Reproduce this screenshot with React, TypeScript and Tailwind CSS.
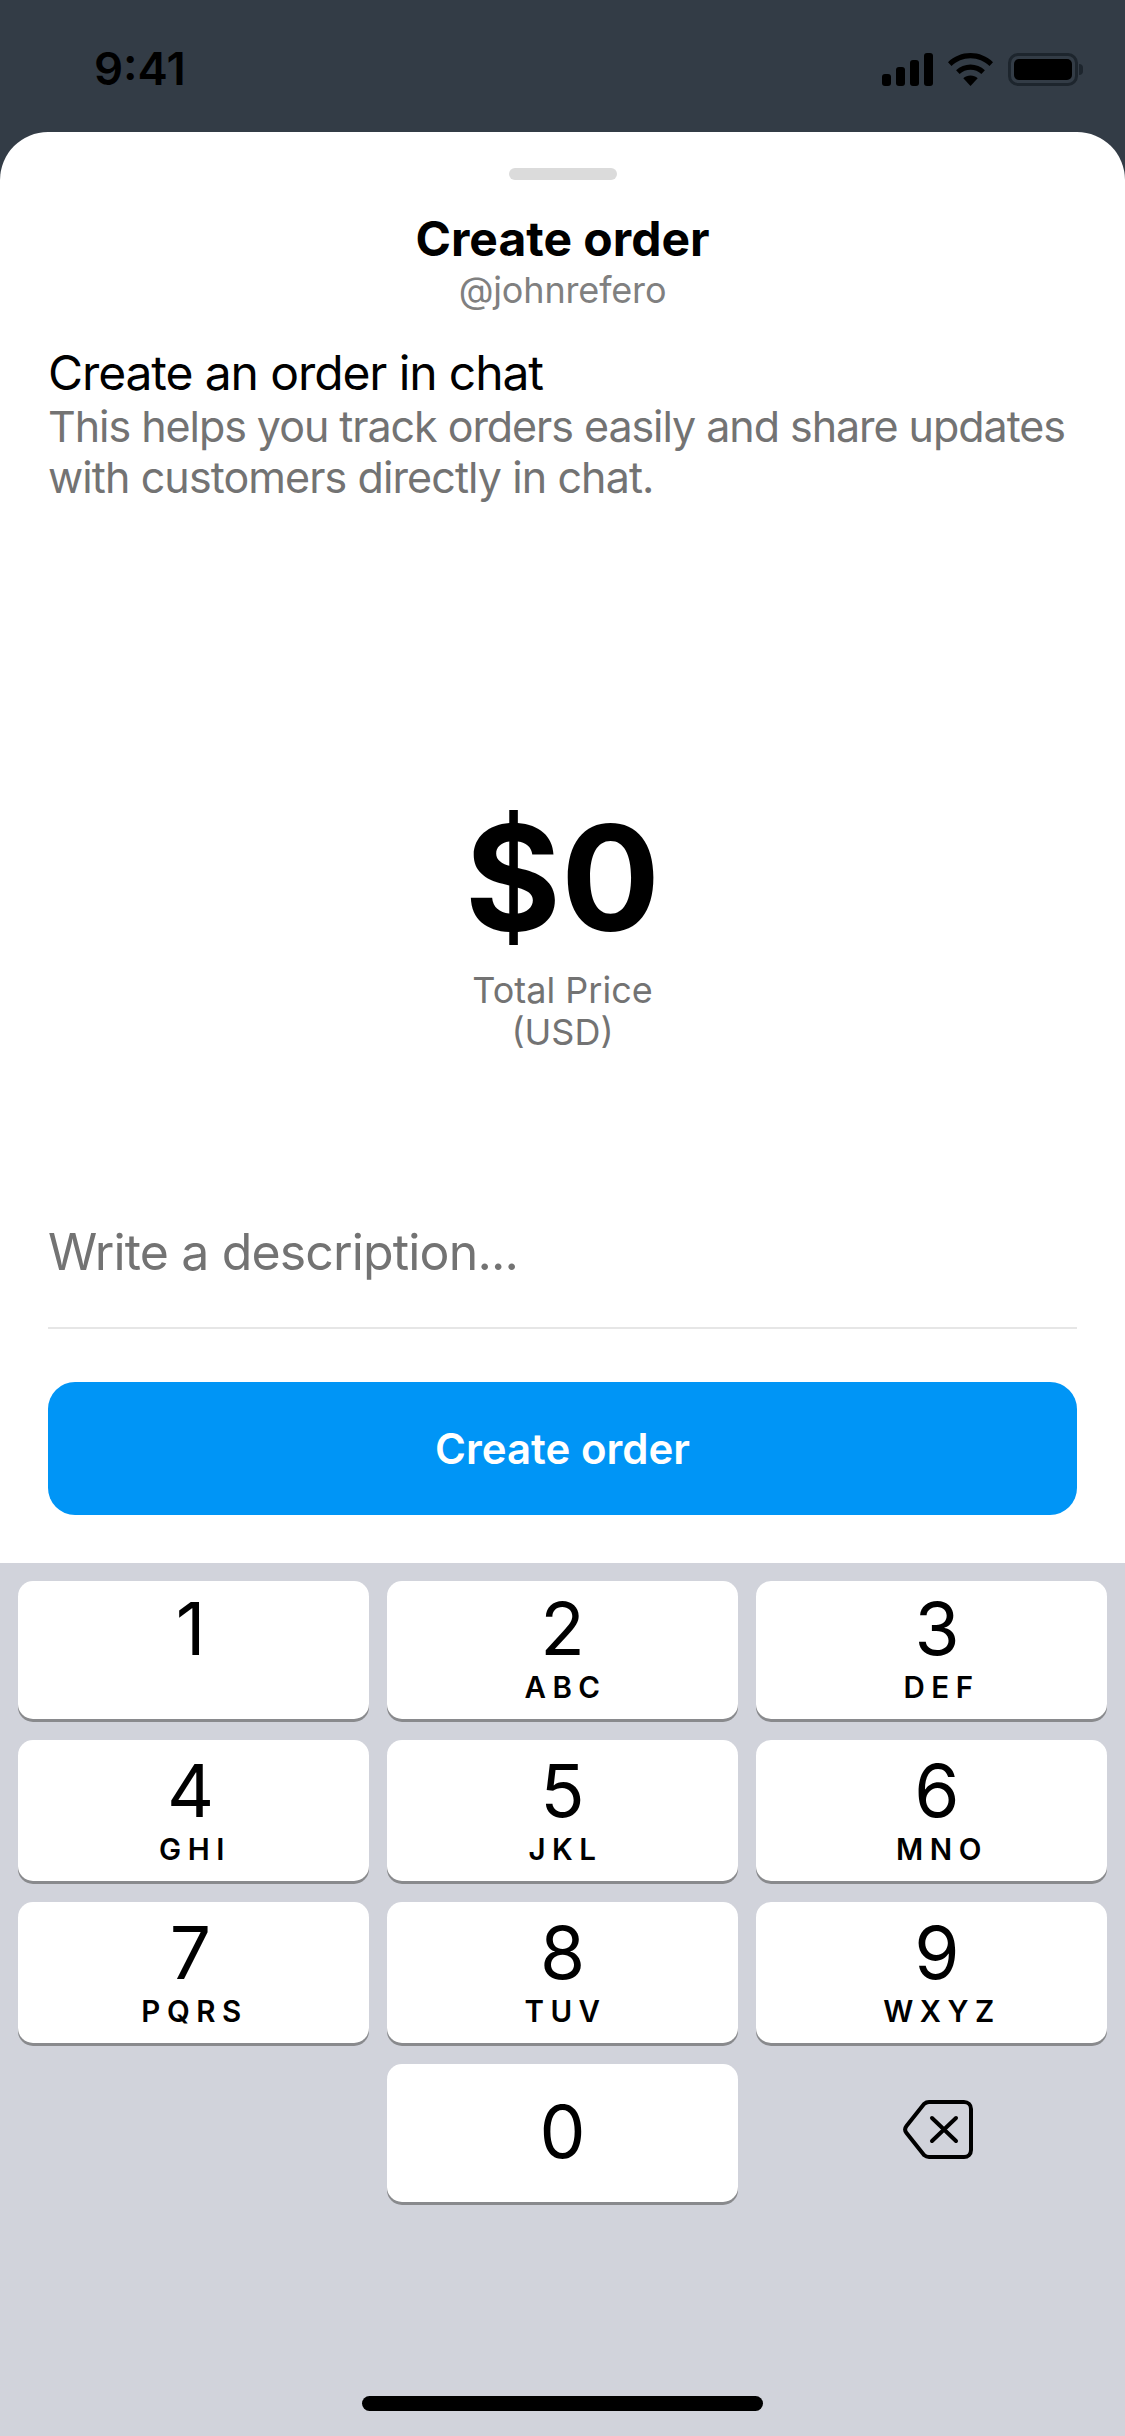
import React from "react";

const keys = [
  { n: "1", l: "", d: "pr-[6px]", t: "pr-[2px]", tall: false },
  { n: "2", l: "ABC", d: "", t: "pl-[6px]", tall: false },
  { n: "3", l: "DEF", d: "pl-[11px]", t: "pl-[20px]", tall: false },
  { n: "4", l: "GHI", d: "pr-[6px]", t: "pl-[3px]", tall: true },
  { n: "5", l: "JKL", d: "", t: "pl-[6px]", tall: true },
  { n: "6", l: "MNO", d: "pl-[11px]", t: "pl-[21px]", tall: true },
  { n: "7", l: "PQRS", d: "pr-[6px]", t: "pl-[2px]", tall: true },
  { n: "8", l: "TUV", d: "", t: "pl-[6px]", tall: true },
  { n: "9", l: "WXYZ", d: "pl-[11px]", t: "pl-[21px]", tall: true },
];

const Key: React.FC<{ n: string; l: string; d: string; t: string; tall: boolean }> = ({ n, l, d, t, tall }) => (
  <div className={`${tall ? "h-[141px]" : "h-[138px]"} rounded-[15px] bg-white shadow-[0_3px_0_0_#898a8d] flex flex-col items-center text-black`}>
    <div className={`${tall ? "h-[91px] pt-[11px]" : "h-[88px] pt-[8px]"} text-[73px] leading-[80px] font-normal ${d}`}>{n}</div>
    <div className={`h-[36px] text-[29.500px] leading-[36px] font-semibold tracking-[6.500px] ${t}`}>{l}</div>
  </div>
);

const StatusIcons = () => (
  <div className="flex items-center gap-[15px]">
    <svg width="51" height="33" viewBox="0 0 51 33" fill="#000">
      <rect x="0" y="21" width="9" height="12" rx="3" />
      <rect x="14" y="14" width="9" height="19" rx="3" />
      <rect x="28" y="7" width="9" height="26" rx="3" />
      <rect x="42" y="0" width="9" height="33" rx="3" />
    </svg>
    <svg width="45" height="33" viewBox="0 0 45 33" fill="#000">
      <path d="M22.5 0C31 0 39 3.300 45 9.200L41.500 13C36.400 8 29.700 5.200 22.500 5.200S8.600 8 3.500 13L0 9.200C6 3.300 14 0 22.500 0Z" />
      <path d="M22.500 11.500C27.900 11.500 33 13.600 36.900 17.300L33.400 21C30.500 18.200 26.600 16.700 22.500 16.700S14.500 18.200 11.600 21L8.100 17.300C12 13.600 17.100 11.500 22.500 11.500Z" />
      <path d="M22.500 22.500C25.200 22.500 27.700 23.500 29.700 25.300L22.500 33L15.300 25.300C17.300 23.500 19.800 22.500 22.500 22.500Z" />
    </svg>
    <div className="flex items-center">
      <div className="w-[70px] h-[33px] rounded-[10px] border-[3px] border-[#1d252d] p-[3px]">
        <div className="w-full h-full rounded-[5px] bg-black" />
      </div>
      <div className="w-[4px] h-[11px] ml-[1px] rounded-r-[4px] bg-[#1d252d]" />
    </div>
  </div>
);

const Backspace = () => (
  <svg width="70" height="59" viewBox="0 0 70 59" fill="none" stroke="#000" strokeWidth="4" strokeLinecap="round" strokeLinejoin="round">
    <path d="M26 2H61C65 2 68 5 68 9V50C68 54 65 57 61 57H26C24 57 22.500 56.300 21 55L3.500 33C1.500 30.500 1.500 28.500 3.500 26L21 4C22.500 2.700 24 2 26 2Z" />
    <path d="M29 18L53 41M53 18L29 41" />
  </svg>
);

export default function App() {
  return (
    <div className="w-[1125px] h-[2436px] overflow-hidden flex flex-col bg-[#333c46] font-['Inter',sans-serif]">
      <div className="h-[132px] shrink-0 pl-[94px] pr-[42px] pt-[43px] flex items-start justify-between">
        <span className="text-[45.500px] leading-[52px] font-semibold text-black">9:41</span>
        <div className="pt-[10px]">
          <StatusIcons />
        </div>
      </div>

      <div className="h-[1431px] shrink-0 rounded-t-[48px] bg-white px-[48px] flex flex-col">
        <div className="mt-[36px] mx-auto w-[108px] h-[12px] rounded-full bg-[#dbdbdb]" />
        <div className="mt-[30px] text-center text-[48px] leading-[58px] font-bold text-black">Create order</div>
        <div className="text-center text-[36px] leading-[44px] text-[#808080] tracking-[-0.15px]">@johnrefero</div>
        <div className="mt-[33px] text-[48px] leading-[56px] tracking-[-1.1px] text-black">Create an order in chat</div>
        <div className="text-[43px] leading-[51px] text-[#737373]">
          <div className="whitespace-nowrap tracking-[-1.05px]">This helps you track orders easily and share updates</div>
          <div className="whitespace-nowrap tracking-[-0.9px]">with customers directly in chat.</div>
        </div>

        <div className="mt-[288px] text-center text-[147px] leading-[174px] font-bold text-black">$0</div>
        <div className="mt-[4px] text-center text-[36px] leading-[42px] text-[#737373]">
          <div>Total Price</div>
          <div>(USD)</div>
        </div>

        <div className="mt-[168px] h-[108px] border-b-2 border-[#e6e6e6] text-[50px] leading-[62px] tracking-[-0.85px] text-[#737373]">Write a description...</div>

        <button className="mt-[53px] h-[133px] rounded-[27px] bg-[#0095f6] text-[42px] font-semibold text-white">Create order</button>
      </div>

      <div className="flex-1 bg-[#d1d3db] px-[18px] pt-[18px] flex flex-col">
        <div className="grid grid-cols-3 gap-x-[18px] gap-y-[21px]">
          {keys.map((k) => (
            <Key key={k.n} n={k.n} l={k.l} d={k.d} t={k.t} tall={k.tall} />
          ))}
          <div />
          <div className="h-[138px] pb-[2px] rounded-[15px] bg-white shadow-[0_3px_0_0_#898a8d] flex items-center justify-center text-[73px] text-black">0</div>
          <div className="flex items-center justify-center pl-[12px] pb-[8px]">
            <Backspace />
          </div>
        </div>
        <div className="mt-auto mb-[25px] mx-auto w-[401px] h-[15px] rounded-full bg-black" />
      </div>
    </div>
  );
}
